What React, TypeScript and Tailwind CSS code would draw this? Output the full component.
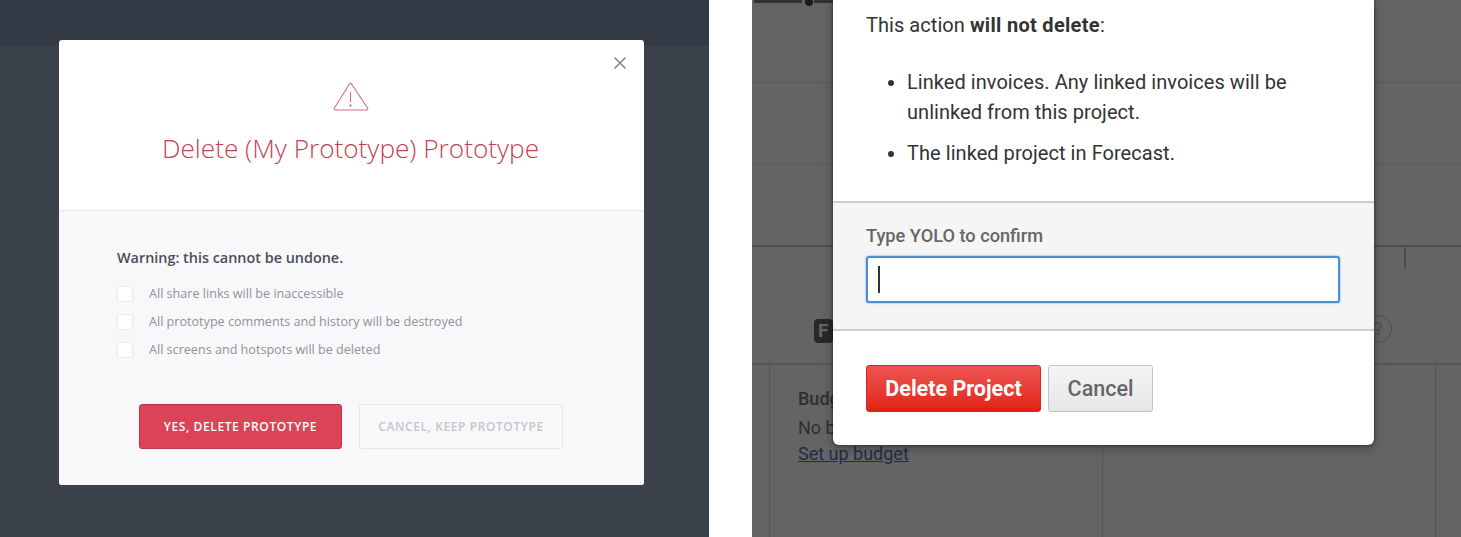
import React from 'react';

const checks = [
  'All share links will be inaccessible',
  'All prototype comments and history will be destroyed',
  'All screens and hotspots will be deleted',
];

function PrototypeModal() {
  return (
    <div className="absolute left-[59px] top-[40px] w-[585px] h-[445px] flex flex-col rounded-[3px] overflow-hidden bg-white font-['Open_Sans',sans-serif]">
      <div className="relative h-[171px] shrink-0 border-b border-[#e8e9ee] flex flex-col items-center">
        <svg className="absolute right-[17px] top-[16px]" width="14" height="14" viewBox="0 0 14 14" fill="none" stroke="#83878c" strokeWidth="1.6">
          <path d="M1.5 1.5 12.5 12.5M12.5 1.5 1.5 12.5" />
        </svg>
        <svg className="mt-[42px] mr-[2px]" width="36" height="29" viewBox="0 0 36 29" fill="none" stroke="#cf6f7f" strokeWidth="1.1">
          <path d="M18 1.2 34.6 26a1.3 1.3 0 0 1-1.1 2H2.5a1.3 1.3 0 0 1-1.1-2L17 1.2a.6.6 0 0 1 1 0Z" strokeLinejoin="round" />
          <path d="M17.5 10v10" />
          <circle cx="17.5" cy="23.4" r="1" fill="#9d4a5a" stroke="none" />
        </svg>
        <h1 className="mt-[20px] mr-[2px] text-[26.2px] leading-[34px] font-light text-[#c4434f]">Delete (My Prototype) Prototype</h1>
      </div>
      <div className="flex-1 bg-[#f8f8fb] pl-[58px] pt-[37px]">
        <p className="text-[14.4px] leading-[20px] font-semibold text-[#4b4e55]">Warning: this cannot be undone.</p>
        <ul className="mt-[16px] flex flex-col gap-[8px]">
          {checks.map((c) => (
            <li key={c} className="flex items-center gap-[16px] h-[20px]">
              <span className="w-[16px] h-[16px] rounded-[2px] bg-white border border-[#e9eaef]" />
              <span className="text-[12.6px] leading-[20px] text-[#8f9297]">{c}</span>
            </li>
          ))}
        </ul>
        <div className="mt-[44px] ml-[22px] flex gap-[17px]">
          <button className="w-[203px] h-[45px] rounded-[3px] bg-[#dc4356] border border-[#b93646] text-white text-[12px] font-semibold uppercase tracking-[0.6px]">Yes, delete prototype</button>
          <button className="w-[204px] h-[45px] rounded-[3px] border border-[#e5e6ea] text-[#c3c6c9] text-[12px] font-semibold uppercase tracking-[0.6px]">Cancel, keep prototype</button>
        </div>
      </div>
    </div>
  );
}

function ProjectBackdrop() {
  return (
    <div className="h-full flex flex-col bg-[#646464] text-[#2f2f2f] font-['Roboto',sans-serif]">
      <div className="h-[83px] shrink-0 border-b border-[#5a5a5a] flex items-start pl-[2px]">
        <span className="w-[48px] h-[3px] bg-[#333333]" />
        <span className="ml-[3px] w-[8px] h-[8px] -mt-[2px] rounded-full bg-[#1c1c1c]" />
        <span className="ml-[1px] w-[30px] h-[3px] bg-[#333333]" />
      </div>
      <div className="h-[82px] shrink-0 border-b border-[#5a5a5a]" />
      <div className="h-[82px] shrink-0 border-b-2 border-[#4f4f4f]" />
      <div className="relative h-[118px] shrink-0 border-b-2 border-[#555555]">
        <span className="absolute left-[652px] top-0 w-[2px] h-[22px] bg-[#4d4d4d]" />
        <span className="absolute left-[62px] top-[72px] w-[19px] h-[24px] rounded-[4px] bg-[#292929] text-[#666666] text-[19px] leading-[24px] font-bold pl-[4px]">F</span>
        <span className="absolute left-[612px] top-[68px] w-[28px] h-[28px] rounded-full border border-[#4f4f4f] text-[#4f4f4f] text-[18px] leading-[26px] text-center">?</span>
      </div>
      <div className="flex-1 grid grid-cols-[18px_333px_333px_1fr]">
        <div className="border-r border-[#555555]" />
        <div className="border-r border-[#555555] pl-[28px] pt-[20px] text-[18px] leading-[27px]">
          <p className="font-medium">Budget</p>
          <p className="mt-[2px]">No budget</p>
          <p className="-mt-[1px] text-[#1c2f47] underline">Set up budget</p>
        </div>
        <div className="border-r border-[#555555]" />
        <div />
      </div>
    </div>
  );
}

function ProjectModal() {
  return (
    <div className="absolute left-[81px] top-0 w-[541px] h-[445px] flex flex-col rounded-b-[6px] overflow-hidden bg-white text-[#333333] shadow-[0_0_3px_rgba(0,0,0,0.6),0_3px_12px_rgba(0,0,0,0.3)] font-['Roboto',sans-serif]">
      <div className="h-[201px] shrink-0 pl-[33px] pt-[11px] text-[20px] tracking-[0.05px]">
        <p className="leading-[28px]">This action <strong className="font-bold tracking-[0.3px]">will not delete</strong>:</p>
        <ul className="mt-[28px] ml-[41px] w-[410px] list-disc leading-[30px]">
          <li>Linked invoices. Any linked invoices will be unlinked from this project.</li>
          <li className="mt-[11px]">The linked project in Forecast.</li>
        </ul>
      </div>
      <div className="h-[130px] shrink-0 bg-[#f5f5f5] border-y-2 border-[#cccccc] pl-[33px] pt-[22px]">
        <label className="block text-[18.2px] leading-[22px] font-medium text-[#666666]">Type YOLO to confirm</label>
        <div className="mt-[9px] w-[474px] h-[47px] rounded-[3px] bg-white border-2 border-[#4a90d9] shadow-[0_0_2px_#4a90d9] flex items-center pl-[10px]">
          <span className="w-[2px] h-[27px] bg-[#333333]" />
        </div>
      </div>
      <div className="flex-1 pl-[33px] pt-[34px] flex items-start gap-[7px]">
        <button className="w-[175px] h-[47px] pt-[2px] rounded-[3px] bg-gradient-to-b from-[#ef5350] to-[#e0200f] border border-[#d9261a] text-white text-[21.5px] font-bold">Delete Project</button>
        <button className="w-[105px] h-[47px] pt-[2px] rounded-[3px] bg-gradient-to-b from-[#f5f5f5] to-[#e6e6e6] border border-[#c4c4c4] text-[#666666] text-[21.5px] font-medium">Cancel</button>
      </div>
    </div>
  );
}

export default function App() {
  return (
    <div className="w-[1461px] h-[537px] overflow-hidden bg-white grid grid-cols-[709px_709px] gap-[43px]">
      <section className="relative bg-[#3c424c]">
        <div className="h-[46px] bg-[#343a45]" />
        <PrototypeModal />
      </section>
      <section className="relative">
        <ProjectBackdrop />
        <ProjectModal />
      </section>
    </div>
  );
}
